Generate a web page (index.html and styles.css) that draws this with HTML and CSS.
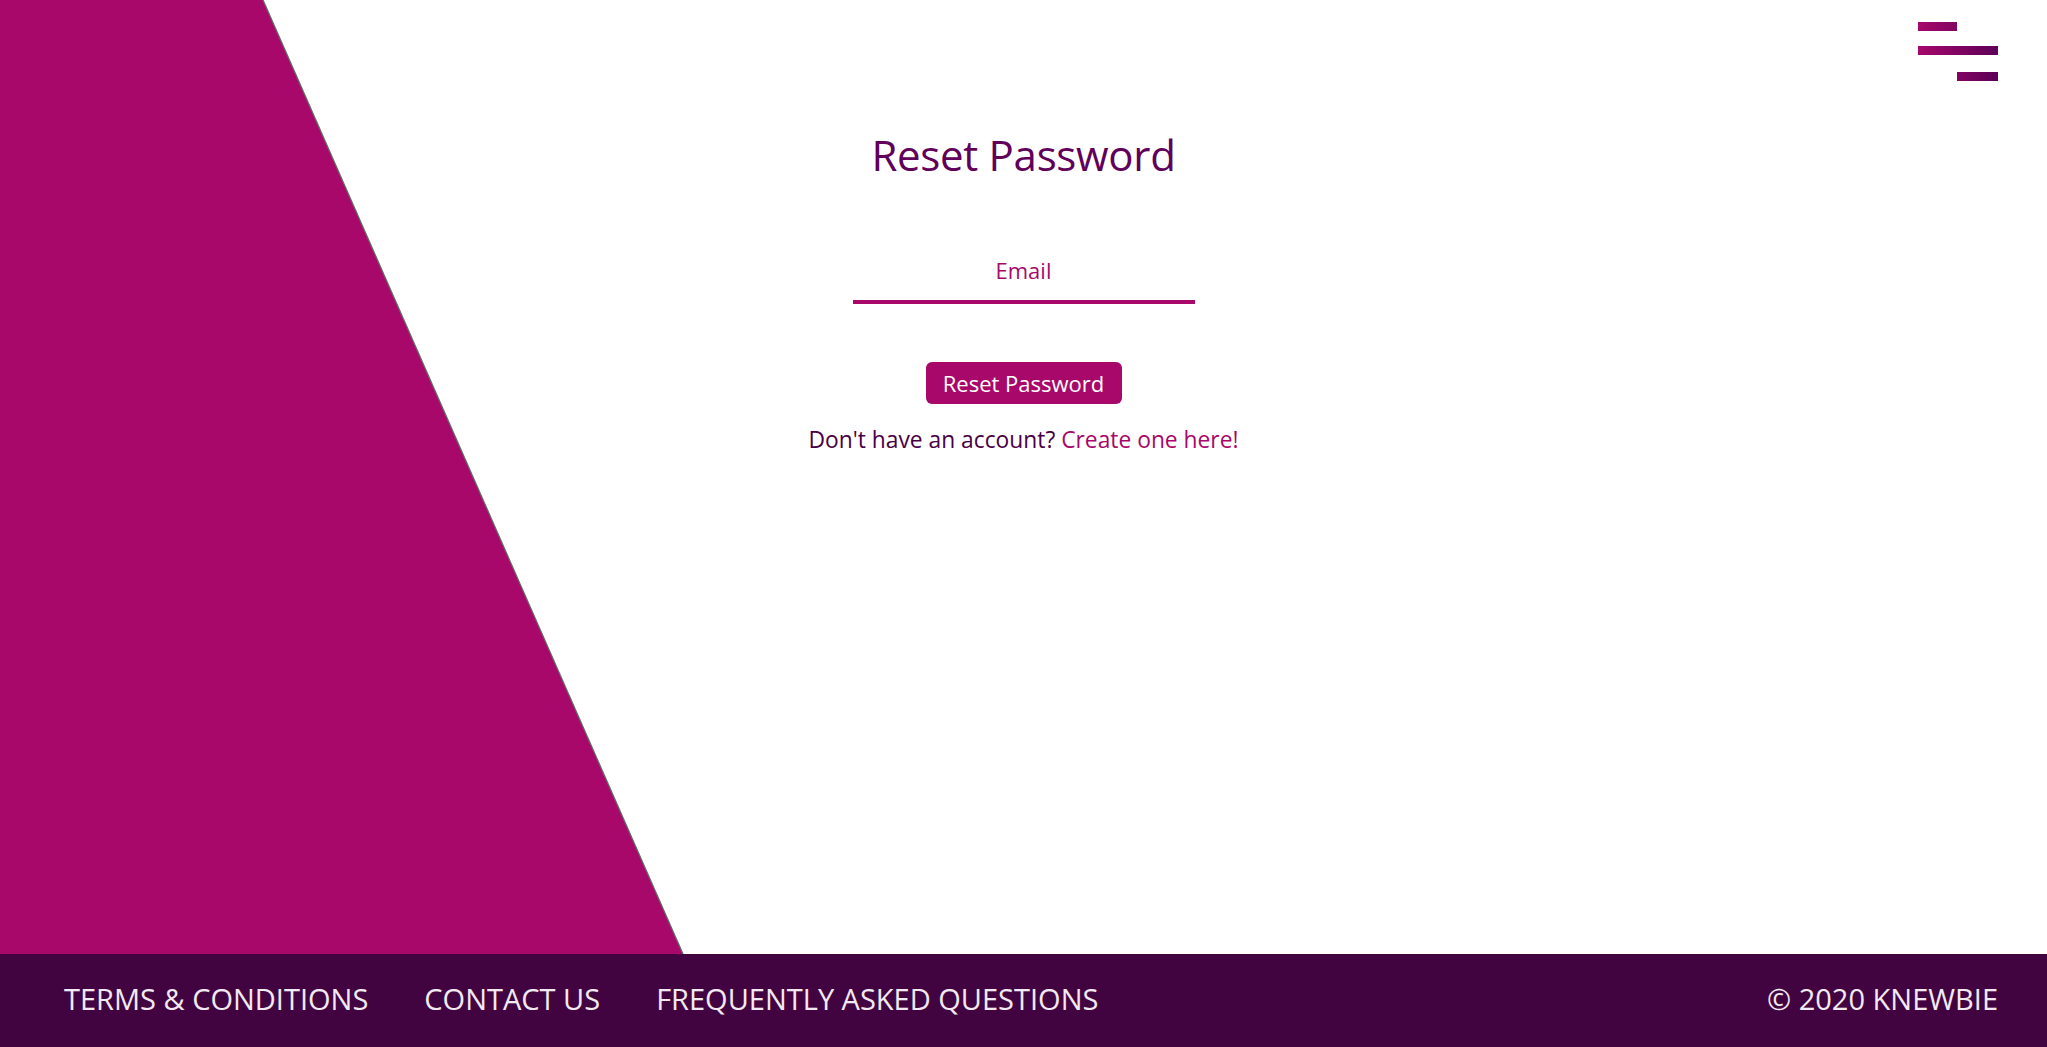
FILE: index.html
```html
<!DOCTYPE html>
<html lang="en">
<head>
<meta charset="utf-8">
<title>Reset Password</title>
<link rel="stylesheet" href="styles.css">
</head>
<body>
<main class="page">
  <svg class="bg-shape" viewBox="0 0 2047 954" preserveAspectRatio="none" aria-hidden="true">
    <polygon points="0,0 263,0 683,954 0,954" fill="#a8086a"/>
    <line x1="263" y1="0" x2="683" y2="954" stroke="#5f6a66" stroke-width="1.3"/>
  </svg>
  <header class="topbar">
    <button class="menu-btn" aria-label="Menu">
      <svg width="80" height="59" viewBox="0 0 80 59">
        <defs>
          <linearGradient id="mg" x1="0" y1="0" x2="80" y2="0" gradientUnits="userSpaceOnUse">
            <stop offset="0" stop-color="#a6086b"/>
            <stop offset="1" stop-color="#5c0057"/>
          </linearGradient>
        </defs>
        <rect x="0" y="0" width="39" height="9" fill="url(#mg)"/>
        <rect x="0" y="24" width="80" height="9" fill="url(#mg)"/>
        <rect x="39" y="50" width="41" height="9" fill="url(#mg)"/>
      </svg>
    </button>
  </header>
  <section class="form">
    <h1 class="title">Reset Password</h1>
    <input class="email" type="email" placeholder="Email">
    <button class="btn">Reset Password</button>
    <p class="signup">Don't have an account? <a class="signup-link" href="#">Create one here!</a></p>
  </section>
</main>
<footer class="footer">
  <nav class="footer-links">
    <a href="#">TERMS &amp; CONDITIONS</a>
    <a href="#">CONTACT US</a>
    <a href="#">FREQUENTLY ASKED QUESTIONS</a>
  </nav>
  <span class="copy">© 2020 KNEWBIE</span>
</footer>
</body>
</html>
```

FILE: styles.css
```css
* { box-sizing: border-box; }
html, body { margin: 0; padding: 0; }
body {
  height: 100vh;
  display: flex;
  flex-direction: column;
  font-family: "Open Sans", "Noto Sans", sans-serif;
  background: #ffffff;
  overflow: hidden;
}
.page {
  position: relative;
  flex: 1;
  display: flex;
  flex-direction: column;
}
.bg-shape {
  position: absolute;
  left: 0;
  top: 0;
  width: 100%;
  height: 100%;
  z-index: 0;
}
.topbar {
  position: relative;
  z-index: 1;
  display: flex;
  justify-content: flex-end;
  padding: 22px 49px 0 0;
}
.menu-btn {
  border: 0;
  padding: 0;
  background: transparent;
  width: 80px;
  height: 59px;
  display: block;
  cursor: pointer;
}
.menu-btn svg { display: block; }
.form {
  position: relative;
  z-index: 1;
  display: flex;
  flex-direction: column;
  align-items: center;
}
.title {
  margin: 46px 0 0;
  font-size: 42px;
  line-height: 56px;
  font-weight: 400;
  color: #60005a;
  letter-spacing: -0.3px;
}
.email {
  margin-top: 58px;
  width: 342px;
  height: 63px;
  border: 0;
  border-bottom: 4px solid #a8086a;
  outline: none;
  background: transparent;
  text-align: center;
  font-family: inherit;
  font-size: 22px;
  color: #a8086a;
  padding: 0 0 2px;
}
.email::placeholder { color: #a8086a; opacity: 1; }
.btn {
  margin-top: 58px;
  width: 196px;
  height: 42px;
  border: 0;
  border-radius: 6px;
  background: #a8086a;
  color: #ffffff;
  font-family: inherit;
  font-size: 22px;
  padding: 0;
  cursor: pointer;
}
.signup {
  margin: 21px 0 0;
  font-size: 22.8px;
  line-height: 30px;
  color: #4a0045;
}
.signup-link {
  color: #a8086a;
  text-decoration: none;
}
.footer {
  height: 93px;
  flex: none;
  background: #420440;
  display: flex;
  align-items: center;
  justify-content: space-between;
  padding: 0 49px 5px 64px;
}
.footer-links {
  display: flex;
  gap: 56px;
}
.footer-links a, .copy {
  color: #f2eaf2;
  text-decoration: none;
  font-size: 29px;
}
```
